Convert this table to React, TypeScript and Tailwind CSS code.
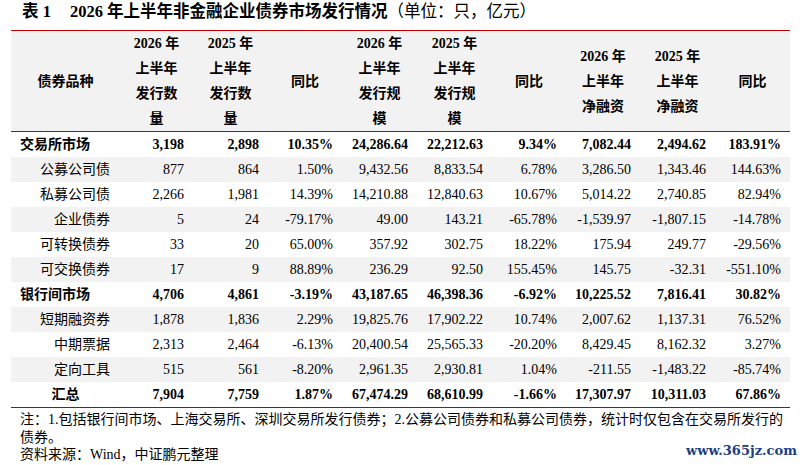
const FONT = { fontFamily: '"Liberation Serif", "Noto Sans CJK SC", serif' };

type Row = {
  name: string;
  kind: "group" | "item" | "total";
  shade?: boolean;
  cells: string[];
};

const rows: Row[] = [
  { name: "交易所市场", kind: "group", cells: ["3,198", "2,898", "10.35%", "24,286.64", "22,212.63", "9.34%", "7,082.44", "2,494.62", "183.91%"] },
  { name: "公募公司债", kind: "item", shade: true, cells: ["877", "864", "1.50%", "9,432.56", "8,833.54", "6.78%", "3,286.50", "1,343.46", "144.63%"] },
  { name: "私募公司债", kind: "item", cells: ["2,266", "1,981", "14.39%", "14,210.88", "12,840.63", "10.67%", "5,014.22", "2,740.85", "82.94%"] },
  { name: "企业债券", kind: "item", shade: true, cells: ["5", "24", "-79.17%", "49.00", "143.21", "-65.78%", "-1,539.97", "-1,807.15", "-14.78%"] },
  { name: "可转换债券", kind: "item", cells: ["33", "20", "65.00%", "357.92", "302.75", "18.22%", "175.94", "249.77", "-29.56%"] },
  { name: "可交换债券", kind: "item", shade: true, cells: ["17", "9", "88.89%", "236.29", "92.50", "155.45%", "145.75", "-32.31", "-551.10%"] },
  { name: "银行间市场", kind: "group", cells: ["4,706", "4,861", "-3.19%", "43,187.65", "46,398.36", "-6.92%", "10,225.52", "7,816.41", "30.82%"] },
  { name: "短期融资券", kind: "item", shade: true, cells: ["1,878", "1,836", "2.29%", "19,825.76", "17,902.22", "10.74%", "2,007.62", "1,137.31", "76.52%"] },
  { name: "中期票据", kind: "item", cells: ["2,313", "2,464", "-6.13%", "20,400.54", "25,565.33", "-20.20%", "8,429.45", "8,162.32", "3.27%"] },
  { name: "定向工具", kind: "item", shade: true, cells: ["515", "561", "-8.20%", "2,961.35", "2,930.81", "1.04%", "-211.55", "-1,483.22", "-85.74%"] },
  { name: "汇总", kind: "total", cells: ["7,904", "7,759", "1.87%", "67,474.29", "68,610.99", "-1.66%", "17,307.97", "10,311.03", "67.86%"] },
];

const headers: string[][] = [
  ["2026 年", "上半年", "发行数", "量"],
  ["2025 年", "上半年", "发行数", "量"],
  ["同比"],
  ["2026 年", "上半年", "发行规", "模"],
  ["2025 年", "上半年", "发行规", "模"],
  ["同比"],
  ["2026 年", "上半年", "净融资"],
  ["2025 年", "上半年", "净融资"],
  ["同比"],
];

const widths = [109, 73, 75, 74, 75, 75, 74, 74, 75, 75];

export default function App() {
  return (
    <div className="relative h-[465px] w-[809px] overflow-hidden bg-white text-black" style={FONT}>
      {/* title */}
      <div className="flex h-[30px] items-start pl-[22px] text-[16.5px] leading-[24px] font-bold">
        <span>表 1</span>
        <span className="ml-[19px]">2026 年上半年非金融企业债券市场发行情况</span>
        <span className="font-normal">（单位：只，亿元）</span>
      </div>

      <table className="ml-[11px] w-[779px] table-fixed border-collapse text-[14px] leading-[25px]">
        <colgroup>
          {widths.map((w, i) => (
            <col key={i} style={{ width: w }} />
          ))}
        </colgroup>
        <thead>
          <tr className="h-[101px] border-t border-b border-[#c00000] bg-[#f2f2f2] font-bold">
            <th className="text-center font-bold">债券品种</th>
            {headers.map((lines, i) => (
              <th key={i} className="text-center align-middle font-bold">
                {lines.map((l, j) => (
                  <div key={j}>{l}</div>
                ))}
              </th>
            ))}
          </tr>
        </thead>
        <tbody>
          {rows.map((r, i) => (
            <tr
              key={i}
              className={`h-[25px] ${r.shade ? "bg-[#f2f2f2]" : ""} ${
                r.kind !== "item" ? "font-bold" : ""
              } ${i === rows.length - 1 ? "border-b border-[#c00000]" : ""}`}
            >
              <td
                className={
                  r.kind === "group"
                    ? "pl-[9px] text-left"
                    : r.kind === "total"
                      ? "text-center"
                      : "pr-[10px] text-right"
                }
              >
                {r.name}
              </td>
              {r.cells.map((c, j) => (
                <td key={j} className="pr-[9px] text-right whitespace-nowrap">
                  {c}
                </td>
              ))}
            </tr>
          ))}
        </tbody>
      </table>

      {/* notes */}
      <div className="pt-[3px] pl-[20px] pr-[18px] text-[14px] leading-[17.5px]">
        <p>
          注：1.包括银行间市场、上海交易所、深圳交易所发行债券；2.公募公司债券和私募公司债券，统计时仅包含在交易所发行的
          <br />
          债券。
        </p>
        <p>资料来源：Wind，中证鹏元整理</p>
      </div>

      <div
        className="absolute top-[442px] left-[686px] text-[13px] leading-[18px] font-bold text-[#1e4080]"
        style={{ fontFamily: '"DejaVu Serif", serif' }}
      >
        www.365jz.com
      </div>
    </div>
  );
}
